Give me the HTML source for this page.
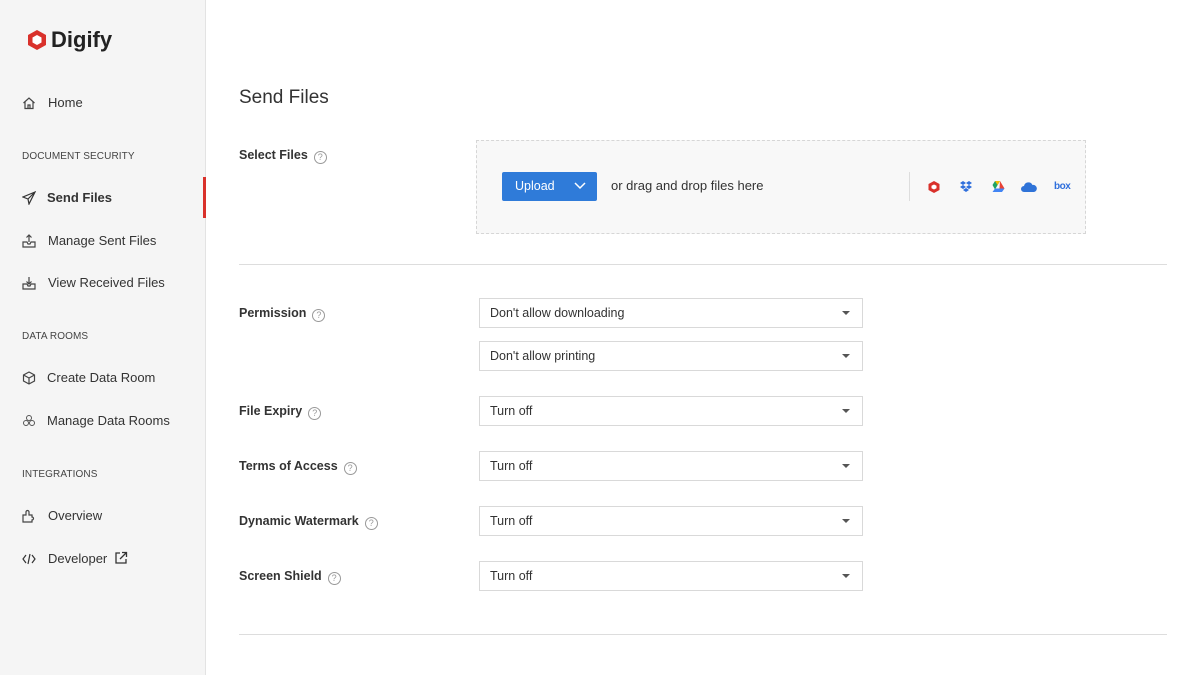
<!DOCTYPE html>
<html><head><meta charset="utf-8"><style>
*{margin:0;padding:0;box-sizing:border-box}
body{width:1200px;height:675px;overflow:hidden;background:#fff;font-family:"Liberation Sans","DejaVu Sans",sans-serif;color:#333;position:relative}
.sb{position:absolute;left:0;top:0;width:206px;height:675px;background:#f5f5f5;border-right:1px solid #e3e3e3}
.a{position:absolute;white-space:nowrap}
.it{font-size:13px;color:#333}
.sec{font-size:10px;color:#444;letter-spacing:.1px}
.ic{position:absolute;width:14px;height:14px}
.lbl{font-size:12.5px;font-weight:bold;color:#333}
.q{display:inline-block;width:13px;height:13px;border:1px solid #999;border-radius:50%;font-size:9px;text-align:center;line-height:11px;color:#999;font-weight:normal;vertical-align:-1px;margin-left:6px}
.sel{position:absolute;left:479px;width:384px;height:30px;border:1px solid #d9d9d9;font-size:12.5px;line-height:28px;padding-left:10px;color:#333}
.sel:after{content:"";position:absolute;right:12px;top:12px;border-left:4px solid transparent;border-right:4px solid transparent;border-top:4px solid #555}
</style></head><body>
<div class="sb"></div>
<div class="a" style="left:203px;top:177px;width:3px;height:41px;background:#d9312b"></div>
<svg class="a" style="left:26px;top:29px" width="22" height="22" viewBox="0 0 22 22"><polygon points="11,1 20,6 20,16 11,21 2,16 2,6" fill="#d9312b"/><polygon points="11,6 15.5,8.5 15.5,13.5 11,16 6.5,13.5 6.5,8.5" fill="#fff"/></svg>
<div class="a" style="left:51px;top:27px;font-size:22px;font-weight:bold;color:#222">Digify</div>

<svg class="ic" style="left:22px;top:96px" viewBox="0 0 14 14" fill="none" stroke="#444" stroke-width="1.2"><path d="M1.5 7L7 2l5.5 5M3 6v6.5h8V6M6 12.5V9h2v3.5"/></svg>
<div class="a it" style="left:48px;top:95px">Home</div>
<div class="a sec" style="left:22px;top:151px">DOCUMENT SECURITY</div>
<svg class="ic" style="left:22px;top:191px" viewBox="0 0 14 14" fill="none" stroke="#333" stroke-width="1.2"><path d="M13 1L1 6l5 2 1 5 6-12zM6 8l7-7"/></svg>
<div class="a it" style="left:47px;top:190px;font-weight:bold">Send Files</div>
<svg class="ic" style="left:22px;top:234px" viewBox="0 0 14 14" fill="none" stroke="#444" stroke-width="1.2"><path d="M1 8v5h12V8h-4l-1 2H6L5 8zM7 8V1M4.5 3.5L7 1l2.5 2.5"/></svg>
<div class="a it" style="left:48px;top:233px">Manage Sent Files</div>
<svg class="ic" style="left:22px;top:276px" viewBox="0 0 14 14" fill="none" stroke="#444" stroke-width="1.2"><path d="M1 8v5h12V8h-4l-1 2H6L5 8zM7 1v7M4.5 5.5L7 8l2.5-2.5"/></svg>
<div class="a it" style="left:48px;top:275px">View Received Files</div>
<div class="a sec" style="left:22px;top:331px">DATA ROOMS</div>
<svg class="ic" style="left:22px;top:371px" viewBox="0 0 14 14" fill="none" stroke="#444" stroke-width="1.2"><path d="M7 1l5.5 3v6L7 13 1.5 10V4zM1.5 4L7 7l5.5-3M7 7v6"/></svg>
<div class="a it" style="left:47px;top:370px">Create Data Room</div>
<svg class="ic" style="left:22px;top:414px" viewBox="0 0 14 14" fill="none" stroke="#555" stroke-width="1"><circle cx="7" cy="4" r="2.5"/><circle cx="4" cy="9" r="2.5"/><circle cx="10" cy="9" r="2.5"/></svg>
<div class="a it" style="left:47px;top:413px">Manage Data Rooms</div>
<div class="a sec" style="left:22px;top:469px">INTEGRATIONS</div>
<svg class="ic" style="left:22px;top:509px" viewBox="0 0 14 14" fill="none" stroke="#444" stroke-width="1.2"><path d="M1 13V6h3V3a1.5 1.5 0 013 0v3h3v2a1.5 1.5 0 010 3v2z"/></svg>
<div class="a it" style="left:48px;top:508px">Overview</div>
<svg class="ic" style="left:22px;top:552px" viewBox="0 0 14 14" fill="none" stroke="#333" stroke-width="1.2"><path d="M4 3L1 7l3 4M10 3l3 4-3 4M8 2L6 12"/></svg>
<div class="a it" style="left:48px;top:551px">Developer</div>
<svg class="ic" style="left:114px;top:551px" viewBox="0 0 14 14" fill="none" stroke="#333" stroke-width="1.3"><path d="M6 2H2v10h10V8M8 1.5h4.5V6M12.5 1.5L6 8"/></svg>

<div class="a" style="left:239px;top:87px;font-size:19px;color:#333">Send Files</div>
<div class="a lbl" style="left:239px;top:148px">Select Files<span class="q">?</span></div>
<div class="a" style="left:476px;top:140px;width:610px;height:94px;border:1px dashed #d6d6d6;background:#f8f8f8"></div>
<div class="a" style="left:502px;top:172px;width:95px;height:29px;background:#2f7bd9;border-radius:2px;color:#fff;font-size:12.5px;line-height:29px;padding-left:13px">Upload</div>
<svg class="a" style="left:574px;top:182px" width="12" height="8" viewBox="0 0 12 8" fill="none" stroke="#fff" stroke-width="1.5"><path d="M1 1l5 5 5-5"/></svg>
<div class="a" style="left:611px;top:178px;font-size:13px;color:#333">or drag and drop files here</div>
<div class="a" style="left:909px;top:172px;width:1px;height:29px;background:#ddd"></div>
<svg class="a" style="left:927px;top:180px" width="14" height="14" viewBox="0 0 14 14"><polygon points="7,1 12.5,4 12.5,10 7,13 1.5,10 1.5,4" fill="#d9312b"/><polygon points="7,4.5 9.5,5.8 9.5,8.2 7,9.5 4.5,8.2 4.5,5.8" fill="#fff"/></svg>
<svg class="a" style="left:959px;top:180px" width="14" height="14" viewBox="0 0 14 14" fill="#2f6fdc"><path d="M4 1L1 3l3 2 3-2zM10 1L7 3l3 2 3-2zM1 7l3 2 3-2-3-2zM13 7l-3 2-3-2 3-2zM4 10l3 2 3-2-3-2z"/></svg>
<svg class="a" style="left:990px;top:180px" width="15" height="13" viewBox="0 0 15 13"><path d="M5 1h5l-5 8.5L2.5 5z" fill="#1fa463"/><path d="M10 1l4.5 7.5h-5z" fill="#e94235"/><path d="M2.5 12l2.5-3.5h9.5L12 12z" fill="#4285f4"/><path d="M5 1h5l-2.5 4z" fill="#fbbc04"/></svg>
<svg class="a" style="left:1021px;top:182px" width="16" height="10" viewBox="0 0 16 10"><path d="M3 10a3 3 0 010-6 4.5 4.5 0 018.5-1A3.5 3.5 0 0113 10z" fill="#2f73d8"/></svg>
<div class="a" style="left:1054px;top:181px;font-size:10px;font-weight:bold;color:#2f6fdc;letter-spacing:-.5px">box</div>

<div class="a" style="left:239px;top:264px;width:928px;height:1px;background:#ddd"></div>
<div class="a lbl" style="left:239px;top:306px">Permission<span class="q">?</span></div>
<div class="sel" style="top:298px">Don't allow downloading</div>
<div class="sel" style="top:341px">Don't allow printing</div>
<div class="a lbl" style="left:239px;top:404px">File Expiry<span class="q">?</span></div>
<div class="sel" style="top:396px">Turn off</div>
<div class="a lbl" style="left:239px;top:459px">Terms of Access<span class="q">?</span></div>
<div class="sel" style="top:451px">Turn off</div>
<div class="a lbl" style="left:239px;top:514px">Dynamic Watermark<span class="q">?</span></div>
<div class="sel" style="top:506px">Turn off</div>
<div class="a lbl" style="left:239px;top:569px">Screen Shield<span class="q">?</span></div>
<div class="sel" style="top:561px">Turn off</div>
<div class="a" style="left:239px;top:634px;width:928px;height:1px;background:#ddd"></div>
</body></html>
